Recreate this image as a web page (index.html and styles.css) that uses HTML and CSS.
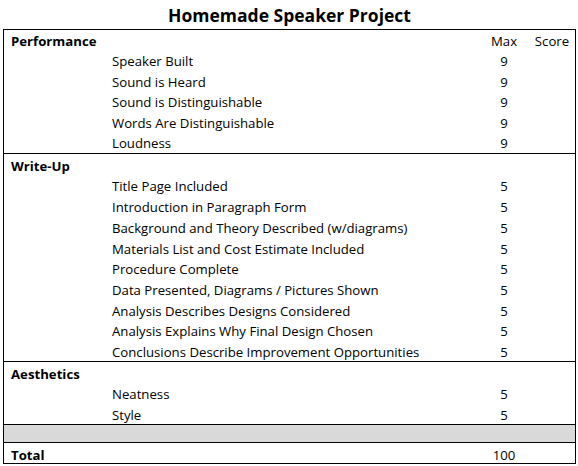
FILE: index.html
```html
<!DOCTYPE html>
<html>
<head>
<meta charset="utf-8">
<link rel="stylesheet" href="styles.css">
</head>
<body>
<div class="page">
  <div class="title">Homemade Speaker Project</div>
  <div class="sheet">
    <div class="section s1">
      <div class="row"><span class="head">Performance</span><span></span><span class="max">Max</span><span class="score">Score</span></div>
      <div class="row"><span></span><span>Speaker Built</span><span class="max">9</span><span></span></div>
      <div class="row"><span></span><span>Sound is Heard</span><span class="max">9</span><span></span></div>
      <div class="row"><span></span><span>Sound is Distinguishable</span><span class="max">9</span><span></span></div>
      <div class="row"><span></span><span>Words Are Distinguishable</span><span class="max">9</span><span></span></div>
      <div class="row"><span></span><span>Loudness</span><span class="max">9</span><span></span></div>
    </div>
    <div class="section s2">
      <div class="row"><span class="head">Write-Up</span><span></span><span></span><span></span></div>
      <div class="row"><span></span><span>Title Page Included</span><span class="max">5</span><span></span></div>
      <div class="row"><span></span><span>Introduction in Paragraph Form</span><span class="max">5</span><span></span></div>
      <div class="row"><span></span><span>Background and Theory Described (w/diagrams)</span><span class="max">5</span><span></span></div>
      <div class="row"><span></span><span>Materials List and Cost Estimate Included</span><span class="max">5</span><span></span></div>
      <div class="row"><span></span><span>Procedure Complete</span><span class="max">5</span><span></span></div>
      <div class="row"><span></span><span>Data Presented, Diagrams / Pictures Shown</span><span class="max">5</span><span></span></div>
      <div class="row"><span></span><span>Analysis Describes Designs Considered</span><span class="max">5</span><span></span></div>
      <div class="row"><span></span><span>Analysis Explains Why Final Design Chosen</span><span class="max">5</span><span></span></div>
      <div class="row"><span></span><span>Conclusions Describe Improvement Opportunities</span><span class="max">5</span><span></span></div>
    </div>
    <div class="section s3">
      <div class="row"><span class="head">Aesthetics</span><span></span><span></span><span></span></div>
      <div class="row"><span></span><span>Neatness</span><span class="max">5</span><span></span></div>
      <div class="row"><span></span><span>Style</span><span class="max">5</span><span></span></div>
    </div>
    <div class="spacer"></div>
    <div class="row total"><span class="head">Total</span><span></span><span class="max">100</span><span></span></div>
  </div>
</div>
</body>
</html>
```

FILE: styles.css
```css
html, body {
  margin: 0;
  padding: 0;
  background: #ffffff;
}
body {
  font-family: "Open Sans", "Noto Sans", sans-serif;
  font-size: 13.2px;
  color: #000000;
}
.page {
  padding-left: 3px;
  width: 573px;
}
.title {
  height: 29px;
  line-height: 30px;
  text-align: center;
  font-weight: bold;
  font-size: 17.5px;
}
.sheet {
  border: 1px solid #000;
  box-sizing: border-box;
  width: 573px;
  height: 435px;
  display: flex;
  flex-direction: column;
}
.section {
  border-bottom: 1px solid #000;
  box-sizing: border-box;
  display: flex;
  flex-direction: column;
}
.s1 { height: 124px; }
.s2 { height: 208px; }
.s3 { height: 63px; }
.row {
  flex: 1 1 0;
  min-height: 0;
  display: grid;
  grid-template-columns: 108px 1fr 50px 46px;
  align-items: end;
  line-height: 18px;
  white-space: nowrap;
}
.s1 .row {
  padding-bottom: 1px;
}
.head {
  font-weight: bold;
  padding-left: 7px;
}
.max {
  text-align: center;
}
.score {
  text-align: center;
}
.spacer {
  height: 18px;
  box-sizing: border-box;
  background: #d9d9d9;
  border-bottom: 1px solid #000;
}
.total {
  line-height: 16px;
}
```
